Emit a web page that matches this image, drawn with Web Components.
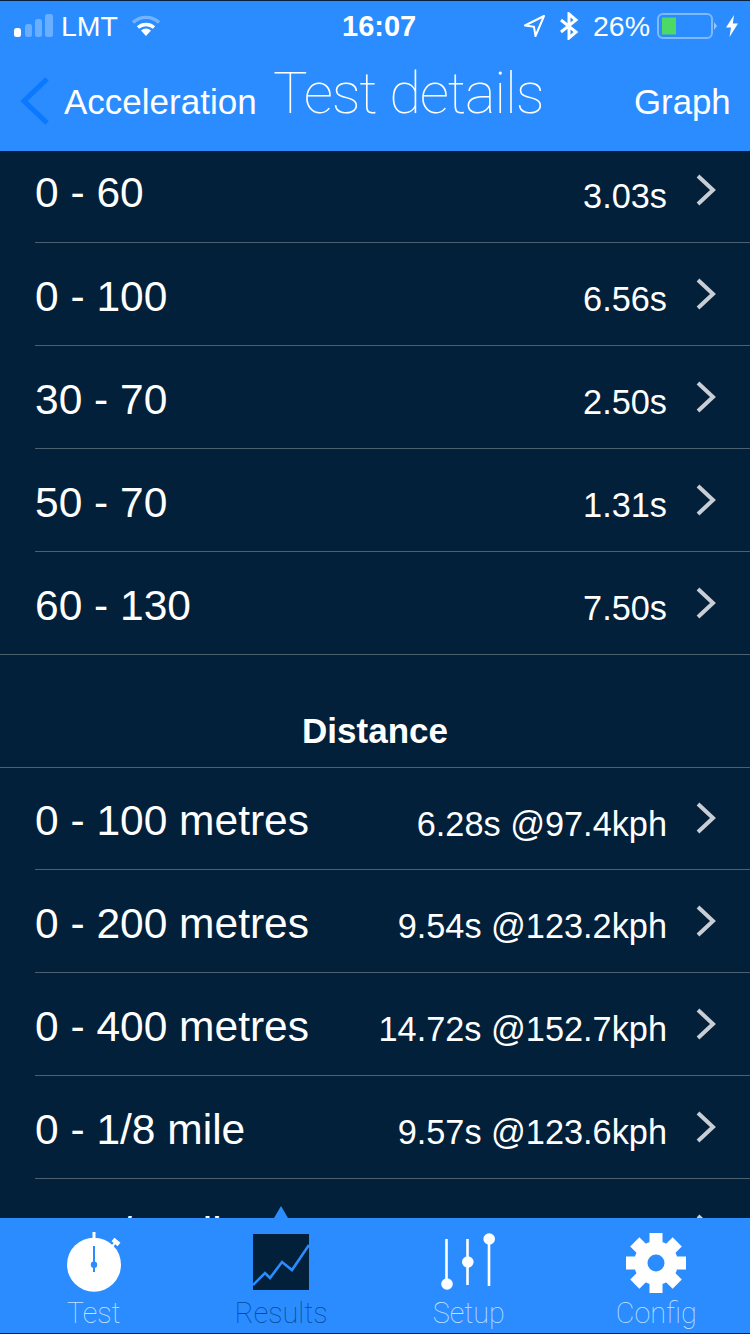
<!DOCTYPE html>
<html>
<head>
<meta charset="utf-8">
<title>Test details</title>
<style>
  html, body { margin: 0; padding: 0; background: #02203a; }
</style>
</head>
<body>
<app-screen>
  <status-bar slot="status"></status-bar>
  <nav-bar slot="nav" back="Acceleration" heading="Test details" action="Graph"></nav-bar>
  <detail-row first label="0 - 60" value="3.03s"></detail-row>
  <detail-row label="0 - 100" value="6.56s"></detail-row>
  <detail-row label="30 - 70" value="2.50s"></detail-row>
  <detail-row label="50 - 70" value="1.31s"></detail-row>
  <detail-row last label="60 - 130" value="7.50s"></detail-row>
  <section-title>Distance</section-title>
  <detail-row snug label="0 - 100 metres" value="6.28s @97.4kph"></detail-row>
  <detail-row label="0 - 200 metres" value="9.54s @123.2kph"></detail-row>
  <detail-row label="0 - 400 metres" value="14.72s @152.7kph"></detail-row>
  <detail-row label="0 - 1/8 mile" value="9.57s @123.6kph"></detail-row>
  <detail-row label="0 - 1/4 mile" value="14.80s @153.1kph"></detail-row>
  <tab-bar slot="tabs"></tab-bar>
</app-screen>

<script>
class AppScreen extends HTMLElement {
  constructor() {
    super();
    this.shadowDOM = this.attachShadow({ mode: "open" });
  }

  connectedCallback() {
    this.shadowDOM.innerHTML = `
      <style>
        :host {
          display: flex;
          flex-direction: column;
          box-sizing: border-box;
          width: 750px;
          height: 1334px;
          padding: 1px 0;
          background: #0a1f3c;
          overflow: hidden;
          font-family: "Liberation Sans", Arial, sans-serif;
        }
        .top {
          height: 150px;
          background: #2a8cff;
          flex: none;
        }
        .list {
          flex: 1;
          min-height: 0;
          overflow: hidden;
          background: #02203a;
        }
      </style>
      <div class="top"><slot name="status"></slot><slot name="nav"></slot></div>
      <div class="list"><slot></slot></div>
      <slot name="tabs"></slot>`;
  }
}

class StatusBar extends HTMLElement {
  constructor() {
    super();
    this.shadowDOM = this.attachShadow({ mode: "open" });
  }

  connectedCallback() {
    this.shadowDOM.innerHTML = `
      <style>
        :host {
          display: flex;
          align-items: center;
          height: 50px;
          padding-left: 14px;
          box-sizing: border-box;
          color: #fff;
          font-size: 28.5px;
          position: relative;
        }
        svg { display: block; flex: none; }
        .carrier { margin-left: 8px; width: 61px; }
        .wifi { margin-left: 10px; }
        .time { margin-left: 182px; width: 76px; font-weight: 700; font-size: 29px; white-space: nowrap; }
        .loc { margin-left: 105px; }
        .bt { margin-left: 13px; }
        .pct { margin-left: 14px; width: 62px; white-space: nowrap; }
        .batt { margin-left: 2px; }
        .bolt { margin-left: 9px; }
      </style>
      <svg width="39" height="24" viewBox="0 0 39 24">
        <rect x="0" y="14" width="7" height="9" rx="2.5" fill="#fff"/>
        <rect x="11" y="10" width="7" height="13" rx="2.5" fill="#fff" fill-opacity=".3"/>
        <rect x="21" y="5" width="7" height="18" rx="2.5" fill="#fff" fill-opacity=".3"/>
        <rect x="31" y="0" width="8" height="23" rx="2.5" fill="#fff" fill-opacity=".3"/>
      </svg>
      <span class="carrier">LMT</span>
      <svg class="wifi" width="28" height="22" viewBox="0 0 28 22">
        <path d="M1 7.5 A19 19 0 0 1 27 7.5" fill="none" stroke="#fff" stroke-opacity=".35" stroke-width="3.4"/>
        <path d="M6 12.5 A12 12 0 0 1 22 12.5" fill="none" stroke="#fff" stroke-width="3.4"/>
        <path d="M14 21 L9 15.6 A7 7 0 0 1 19 15.6 Z" fill="#fff"/>
      </svg>
      <span class="time">16:07</span>
      <svg class="loc" width="23" height="24" viewBox="0 0 23 24">
        <path d="M21 2 L2 11.5 L11 12.8 L12.5 22 Z" fill="none" stroke="#fff" stroke-width="2" stroke-linejoin="round"/>
      </svg>
      <svg class="bt" width="20" height="28" viewBox="0 0 20 28">
        <path d="M2 8 L17 20 L10 26 V2 L17 8 L2 20" fill="none" stroke="#fff" stroke-width="3"/>
      </svg>
      <span class="pct">26%</span>
      <svg class="batt" width="60" height="28" viewBox="0 0 60 28">
        <rect x="1" y="2" width="54" height="24" rx="5" fill="none" stroke="#fff" stroke-opacity=".4" stroke-width="2"/>
        <rect x="5" y="5.5" width="14" height="17" fill="#4cd964"/>
        <path d="M57 10 L60 14 L57 18 Z" fill="#fff" fill-opacity=".5"/>
      </svg>
      <svg class="bolt" width="12" height="22" viewBox="0 0 12 22">
        <path d="M8 0 L0 12.5 H5 L3.5 22 L12 8.5 H6.8 Z" fill="#fff"/>
      </svg>`;
  }
}

class NavBar extends HTMLElement {
  constructor() {
    super();
    this.shadowDOM = this.attachShadow({ mode: "open" });
  }

  connectedCallback() {
    this.shadowDOM.innerHTML = `
      <style>
        :host {
          display: flex;
          align-items: center;
          height: 100px;
          padding-left: 20px;
          box-sizing: border-box;
          color: #fff;
          white-space: nowrap;
        }
        svg { flex: none; display: block; margin-bottom: 1px; }
        .back { font-size: 35px; margin-left: 14px; margin-top: 2px; width: 209px; }
        .heading {
          font-family: Roboto, sans-serif;
          font-weight: 100;
          font-size: 58px;
          letter-spacing: -1.2px;
          width: 361px;
          margin-top: -16px;
        }
        .action { font-size: 34.8px; margin-top: 2px; }
      </style>
      <svg width="30" height="50" viewBox="0 0 30 50">
        <path d="M27 3 L4 25 L27 47" fill="none" stroke="#0a78ff" stroke-width="5"/>
      </svg>
      <span class="back">${this.getAttribute("back")}</span>
      <span class="heading">${this.getAttribute("heading")}</span>
      <span class="action">${this.getAttribute("action")}</span>`;
  }
}

class DetailRow extends HTMLElement {
  constructor() {
    super();
    this.shadowDOM = this.attachShadow({ mode: "open" });
  }

  connectedCallback() {
    this.shadowDOM.innerHTML = `
      <style>
        :host {
          display: block;
          padding-left: 35px;
          color: #fff;
          white-space: nowrap;
        }
        :host([last]) { padding-left: 0; }
        :host([last]) .line { padding-left: 35px; }
        .line {
          display: flex;
          align-items: center;
          height: 103px;
          box-sizing: border-box;
          padding-right: 34px;
          border-bottom: 1px solid #4c6070;
        }
        :host([first]) .line { height: 92px; }
        :host([snug]) .line { height: 102px; }
        :host([first]) .label, :host([first]) .value, :host([first]) svg { position: relative; top: -6px; }
        .label { font-size: 42.5px; flex: 1; margin-top: 5px; }
        .value { font-size: 34.3px; margin-top: 11px; }
        svg { display: block; margin-left: 28px; margin-top: -1px; flex: none; }
      </style>
      <div class="line">
        <span class="label">${this.getAttribute("label")}</span>
        <span class="value">${this.getAttribute("value")}</span>
        <svg width="21" height="32" viewBox="0 0 21 32">
          <path d="M3 2 L18 16 L3 30" fill="none" stroke="#c9cdd4" stroke-width="4"/>
        </svg>
      </div>`;
  }
}

class SectionTitle extends HTMLElement {
  constructor() {
    super();
    this.shadowDOM = this.attachShadow({ mode: "open" });
  }

  connectedCallback() {
    this.shadowDOM.innerHTML = `
      <style>
        :host {
          display: flex;
          align-items: flex-end;
          justify-content: center;
          box-sizing: border-box;
          height: 113px;
          padding-bottom: 16px;
          color: #fff;
          font-size: 35px;
          font-weight: 700;
          border-bottom: 1px solid #4c6070;
        }
      </style>
      <slot></slot>`;
  }
}

class TabBar extends HTMLElement {
  constructor() {
    super();
    this.shadowDOM = this.attachShadow({ mode: "open" });
  }

  connectedCallback() {
    this.shadowDOM.innerHTML = `
      <style>
        :host {
          display: grid;
          grid-template-columns: repeat(4, 1fr);
          flex: none;
          height: 115px;
          background: #2a8cff;
          position: relative;
        }
        .tab {
          display: flex;
          flex-direction: column;
          align-items: center;
          font-family: Roboto, sans-serif;
          font-weight: 100;
          font-size: 28.8px;
          color: #c4e2ff;
          padding-top: 14px;
        }
        .tab.on { color: #084a96; }
        .tab svg { display: block; height: 62px; }
        .tab span { line-height: 36px; margin-top: 1px; }
        .marker {
          position: absolute;
          left: 274px;
          top: -12px;
          width: 0;
          height: 0;
          border-left: 7px solid transparent;
          border-right: 7px solid transparent;
          border-bottom: 12px solid #2a8cff;
        }
      </style>
      <div class="marker"></div>
      <div class="tab">
        <svg width="62" height="62" viewBox="0 0 62 62">
          <circle cx="31" cy="32.7" r="27" fill="#fff"/>
          <rect x="29.5" y="0" width="3" height="7" fill="#fff"/>
          <path d="M50 7.5 L56 12.5" stroke="#fff" stroke-width="4.5"/>
          <path d="M52 11 L49 14.5" stroke="#fff" stroke-width="2"/>
          <path d="M31 14 V40" stroke="#2a8cff" stroke-width="2"/>
          <circle cx="31" cy="32.7" r="3.2" fill="#2a8cff"/>
        </svg>
        <span>Test</span>
      </div>
      <div class="tab on">
        <svg width="56" height="62" viewBox="0 0 56 62">
          <rect x="0" y="2" width="56" height="56" fill="#02203a"/>
          <path d="M0 53 L12 41 L17 46 L29 30 L39 38 L56 13" fill="none" stroke="#2a8cff" stroke-width="2.6"/>
        </svg>
        <span>Results</span>
      </div>
      <div class="tab">
        <svg width="56" height="62" viewBox="0 0 56 62">
          <path d="M5.5 7 V52 M26.5 7 V53 M48 7 V54" stroke="#fff" stroke-width="2.6"/>
          <circle cx="6" cy="52" r="5.8" fill="#fff"/>
          <circle cx="26.8" cy="30" r="5.8" fill="#fff"/>
          <circle cx="48.2" cy="7" r="5.8" fill="#fff"/>
        </svg>
        <span>Setup</span>
      </div>
      <div class="tab">
        <svg width="60" height="62" viewBox="0 0 60 62">
          <g fill="#fff" transform="translate(30 31)">
            <rect x="-6.5" y="-30" width="13" height="60"/>
            <rect x="-6.5" y="-30" width="13" height="60" transform="rotate(45)"/>
            <rect x="-6.5" y="-30" width="13" height="60" transform="rotate(90)"/>
            <rect x="-6.5" y="-30" width="13" height="60" transform="rotate(135)"/>
            <circle r="22"/>
          </g>
          <circle cx="30" cy="31" r="8.5" fill="#2a8cff"/>
        </svg>
        <span>Config</span>
      </div>`;
  }
}

customElements.define("app-screen", AppScreen);
customElements.define("status-bar", StatusBar);
customElements.define("nav-bar", NavBar);
customElements.define("detail-row", DetailRow);
customElements.define("section-title", SectionTitle);
customElements.define("tab-bar", TabBar);
</script>
</body>
</html>
